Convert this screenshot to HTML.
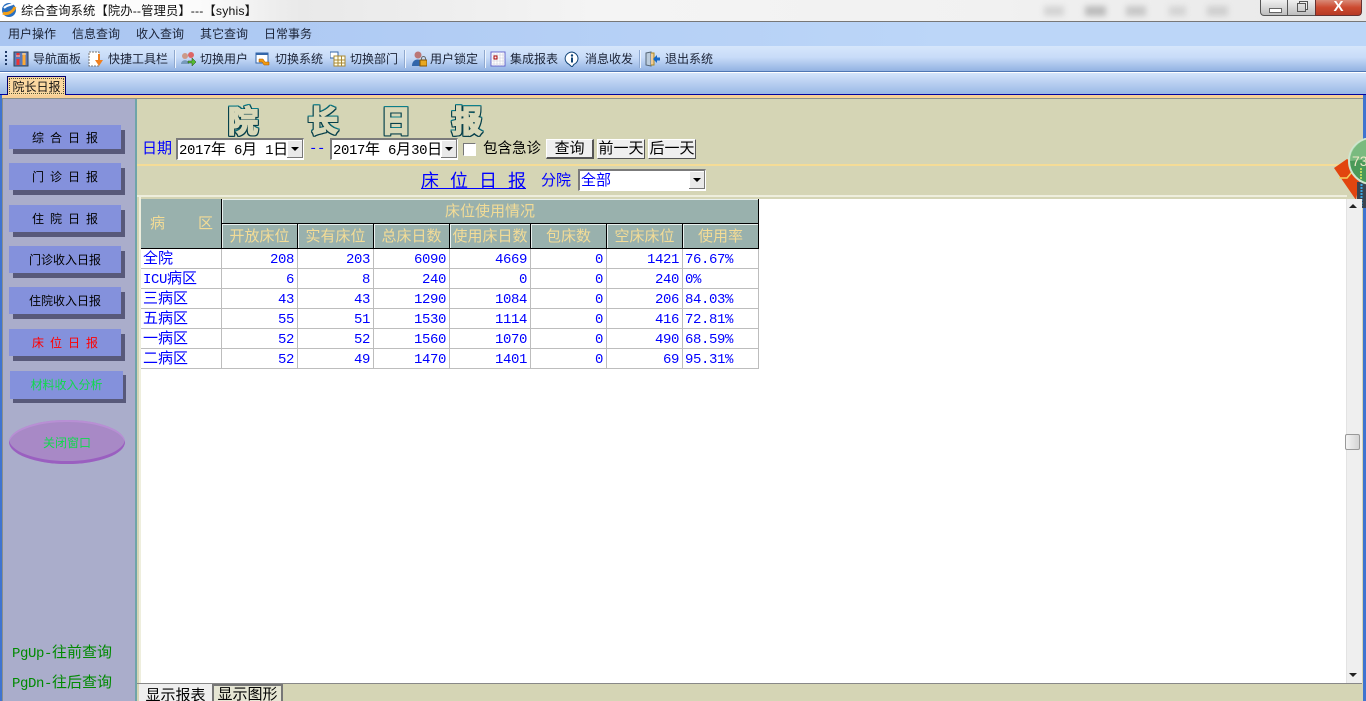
<!DOCTYPE html>
<html lang="zh"><head><meta charset="utf-8"><title>综合查询系统</title>
<style>
html,body{margin:0;padding:0;width:1366px;height:701px;overflow:hidden;background:#fff}
body{position:relative;font:13px "Liberation Sans","Noto Sans CJK SC",sans-serif;color:#000}
.a,.t,.b,.c,.i{position:absolute}
.m{font-family:"Liberation Mono",monospace;font-size:14px;letter-spacing:-.4px}
.t{white-space:pre;line-height:16px;font-size:12px;color:#1a2235}
.b{width:112px;height:27px;left:9px;background:#8491dc;text-align:center;line-height:29px;font-size:12px;box-shadow:4px 5px 0 #58597a;white-space:pre;word-spacing:2.7px}
.i{width:16px;height:16px;top:51px}
.sep{position:absolute;top:50px;width:1px;height:18px;background:#8fa9cf;box-shadow:1px 0 0 #eef4fd}
.c{height:20px;color:#00f;font:14px/22px "Liberation Mono",monospace;letter-spacing:-.4px;box-sizing:border-box;white-space:pre;background:#fff;border-right:1px solid #bdbdbd;border-bottom:1px solid #bdbdbd;padding:0 2px;overflow:hidden}
.n{font:15px/18px "Noto Sans CJK SC",sans-serif;letter-spacing:0}
.h{position:absolute;background:#99b1ad;color:#f3dc96;font-size:15px;text-align:center;box-sizing:border-box;border-right:1px solid #000;border-bottom:1px solid #000;box-shadow:inset 1px 1px 0 #e8f0ee;line-height:25px;white-space:pre}
.r{text-align:right;padding-right:3px}
.sel{position:absolute;height:22px;background:#fff;box-sizing:border-box;border-style:solid;border-width:2px 1px 1px 2px;border-color:#7b7b7b #fff #fff #7b7b7b;font:15px/18px "Noto Sans CJK SC",sans-serif;white-space:pre;padding-left:1px}
.arr{position:absolute;right:0;top:0;width:16px;height:18px;background:#e9e9e9;box-shadow:inset -1px -1px 0 #777,inset 1px 1px 0 #fff}
.arr:after{content:"";position:absolute;left:4px;top:7px;border:4px solid transparent;border-top:4px solid #000;border-bottom:0}
.btn{position:absolute;top:139px;height:20px;background:#efefef;box-sizing:border-box;border:1px solid;border-color:#fff #555 #555 #fff;text-align:center;font-size:15px;line-height:18px;color:#000;white-space:pre}
.big{position:absolute;top:97px;font:700 30px/44px "Noto Sans CJK SC",sans-serif;color:#d8d8b8;-webkit-text-stroke:1.8px #d8d8b8;paint-order:stroke fill;filter:drop-shadow(1px 0 0 #063f4a) drop-shadow(-1px 0 0 #06404a) drop-shadow(0 1px 0 #063f4a) drop-shadow(0 -1px 0 #0a7f8a)}
.blue{position:absolute;color:#00f;white-space:pre;font-size:15px;line-height:18px}
</style></head><body>

<!-- title bar -->
<div class="a" style="left:0;top:0;width:1366px;height:21px;background:linear-gradient(90deg,#fff 0,#fbfbfb 200px,#e9e9e9 300px,#f4f4f4 600px,#f1f1f1 1000px,#e8e8e8 1366px);border-bottom:1px solid #777"></div>
<svg class="a" style="left:1px;top:2px" width="16" height="16" viewBox="0 0 16 16"><circle cx="8" cy="8" r="7" fill="#2a6fc0"/><path d="M2 11C6 13 12 10 14 5" stroke="#f4a018" stroke-width="3" fill="none"/><path d="M3 6C6 3 10 3 12 2" stroke="#fff" stroke-width="2" fill="none"/></svg>
<div class="t" style="left:21px;top:3px;font-size:12.25px;letter-spacing:.16px;color:#111">综合查询系统【院办--管理员】---【syhis】</div>
<!-- blurred taskbar-like -->
<div class="a" style="left:1044px;top:6px;width:20px;height:10px;background:#d4d4d4;filter:blur(3px)"></div>
<div class="a" style="left:1085px;top:6px;width:21px;height:10px;background:#bcbcbc;filter:blur(3px)"></div>
<div class="a" style="left:1126px;top:6px;width:20px;height:10px;background:#c8c8c8;filter:blur(3px)"></div>
<div class="a" style="left:1169px;top:6px;width:17px;height:10px;background:#d4d4d4;filter:blur(3px)"></div>
<div class="a" style="left:1207px;top:6px;width:21px;height:10px;background:#cfcfcf;filter:blur(3px)"></div>
<!-- window controls -->
<div class="a" style="left:1260px;top:0;width:28px;height:16px;background:linear-gradient(#f0f0f0,#bdbdbd);border:1px solid #555;border-top:0;border-radius:0 0 0 4px;box-sizing:border-box"><div class="a" style="left:8px;top:8px;width:11px;height:3px;background:#fff;border:1px solid #666"></div></div>
<div class="a" style="left:1288px;top:0;width:27px;height:16px;background:linear-gradient(#f0f0f0,#bdbdbd);border-bottom:1px solid #555;box-sizing:border-box"><div class="a" style="left:9px;top:3px;width:7px;height:7px;border:1px solid #555;box-shadow:2px -2px 0 -1px #f0f0f0,2px -2px 0 0 #555"></div></div>
<div class="a" style="left:1315px;top:0;width:47px;height:16px;background:linear-gradient(#d98a78,#cc4a30 50%,#b73a26);border:1px solid #633;border-top:0;border-radius:0 0 4px 0;box-sizing:border-box;color:#fff;text-align:center;font:700 15px/14px 'Liberation Sans',sans-serif">X</div>

<!-- menu -->
<div class="a" style="left:0;top:22px;width:1366px;height:24px;background:linear-gradient(90deg,#a9c5f1,#bcd6f8 70%)"></div>
<div class="t" style="left:8px;top:26px">用户操作</div>
<div class="t" style="left:72px;top:26px">信息查询</div>
<div class="t" style="left:136px;top:26px">收入查询</div>
<div class="t" style="left:200px;top:26px">其它查询</div>
<div class="t" style="left:264px;top:26px">日常事务</div>

<!-- toolbar -->
<div class="a" style="left:0;top:46px;width:1366px;height:26px;background:linear-gradient(#d6e6fb,#c8dcf8 45%,#93b2e2);border-bottom:1px solid #4f76b3;box-sizing:border-box"></div>
<div class="a" style="left:5px;top:51px;width:2px;height:15px;background:repeating-linear-gradient(#1f3a66 0 2px,transparent 2px 4px)"></div>
<svg class="i" style="left:13px" viewBox="0 0 16 16"><rect x="1" y="1" width="14" height="14" fill="#5a78b8" stroke="#345"/><path d="M5 2v4M5 8v6" stroke="#e33" stroke-width="3"/><path d="M11 2v12" stroke="#fa3" stroke-width="3"/><path d="M3 5h4M9 3h4" stroke="#ddd"/></svg>
<svg class="i" style="left:88px" viewBox="0 0 16 16"><rect x="1" y="1" width="10" height="14" fill="#fff" stroke="#777" stroke-dasharray="2 1"/><path d="M10 3v6H7l4 6 4-6h-3V3z" fill="#f08020"/></svg>
<svg class="i" style="left:180px" viewBox="0 0 16 16"><circle cx="5" cy="5" r="3" fill="#c98"/><circle cx="11" cy="4" r="3" fill="#d66"/><path d="M1 13c0-5 8-5 8 0z" fill="#79b"/><path d="M8 10h4V7l4 4-4 4v-3H8z" fill="#5b3" stroke="#241" stroke-width=".5"/></svg>
<svg class="i" style="left:255px" viewBox="0 0 16 16"><rect x="1" y="2" width="12" height="10" fill="#fff" stroke="#36a"/><path d="M1 3h12" stroke="#36a" stroke-width="2"/><path d="M4 8h4l2 3h4v3h-5l-2-3H4z" fill="#f09a10" stroke="#a50" stroke-width=".5"/></svg>
<svg class="i" style="left:330px" viewBox="0 0 16 16"><rect x="0" y="1" width="8" height="6" fill="#fff" stroke="#36a"/><rect x="4" y="5" width="11" height="10" fill="#ffe" stroke="#a83"/><path d="M4 9h11M4 12h11M8 5v10M11.500 5v10" stroke="#a83"/></svg>
<svg class="i" style="left:411px" viewBox="0 0 16 16"><circle cx="7" cy="4" r="3.500" fill="#b77"/><path d="M1 15c0-8 9-8 10-3v3z" fill="#36a"/><rect x="9" y="9" width="7" height="6" fill="#e8a820" stroke="#850"/><path d="M10.500 9V7.500a2 2 0 014 0V9" stroke="#666" fill="none"/></svg>
<svg class="i" style="left:490px" viewBox="0 0 16 16"><rect x="1" y="1" width="14" height="14" fill="#fff" stroke="#66c"/><path d="M1 4h14M4 1v14M7 1v14M10 1v14M13 1v14M1 7h14M1 10h14M1 13h14" stroke="#ccd" stroke-width=".6"/><rect x="4" y="5" width="3" height="3" fill="none" stroke="#a00"/></svg>
<svg class="i" style="left:564px" viewBox="0 0 16 16"><path d="M8 1a7 6.500 0 00-3 12.300L8 16l2-2.700A7 6.500 0 008 1z" fill="#fff" stroke="#147"/><circle cx="8" cy="4.500" r="1.200" fill="#147"/><path d="M8 6.500v5" stroke="#147" stroke-width="2"/></svg>
<svg class="i" style="left:645px" viewBox="0 0 16 16"><path d="M1 2l5-1v14l-5-1z" fill="#bcd" stroke="#567"/><path d="M6 2h3v12H6" fill="#ec9" stroke="#a82"/><path d="M8 8l4-4v2.500h3v3h-3V12z" fill="#1668c8"/></svg>
<div class="t" style="left:33px;top:51px">导航面板</div>
<div class="t" style="left:108px;top:51px">快捷工具栏</div>
<div class="sep" style="left:174px"></div>
<div class="t" style="left:200px;top:51px">切换用户</div>
<div class="t" style="left:275px;top:51px">切换系统</div>
<div class="t" style="left:350px;top:51px">切换部门</div>
<div class="sep" style="left:404px"></div>
<div class="t" style="left:430px;top:51px">用户锁定</div>
<div class="sep" style="left:484px"></div>
<div class="t" style="left:510px;top:51px">集成报表</div>
<div class="t" style="left:585px;top:51px">消息收发</div>
<div class="sep" style="left:639px"></div>
<div class="t" style="left:665px;top:51px">退出系统</div>

<!-- tab strip -->
<div class="a" style="left:0;top:73px;width:1366px;height:21px;background:linear-gradient(#d4e4fb,#9ab8e6)"></div>
<div class="a" style="left:0;top:94px;width:1366px;height:1px;background:#0000a0"></div>
<div class="a" style="left:0;top:95px;width:1366px;height:3px;background:#f6cf96"></div>
<div class="a" style="left:7px;top:76px;width:59px;height:19px;background:#fbd8a0;border:1px solid #00006e;border-bottom:0;box-sizing:border-box"><div class="a" style="left:1px;top:1px;right:1px;bottom:1px;border:1px dotted #553;font-size:12px;line-height:17px;text-align:center;color:#111;box-sizing:border-box">院长日报</div></div>

<!-- frame sides -->
<div class="a" style="left:0;top:95px;width:2px;height:606px;background:#3f74d0"></div>
<div class="a" style="left:1363px;top:95px;width:3px;height:606px;background:#3f74d0"></div>
<div class="a" style="left:2px;top:98px;width:1361px;height:603px;background:#8a8f8c"></div>

<!-- left panel -->
<div class="a" style="left:3px;top:99px;width:132px;height:602px;background:#aaadcb"></div>
<div class="a" style="left:135px;top:99px;width:2px;height:602px;background:#6fa4a8"></div>
<div class="b" style="top:125px;height:24px;line-height:26px">综 合 日 报</div>
<div class="b" style="top:163px">门 诊 日 报</div>
<div class="b" style="top:205px">住 院 日 报</div>
<div class="b" style="top:246px">门诊收入日报</div>
<div class="b" style="top:287px">住院收入日报</div>
<div class="b" style="top:329px;color:#f00">床 位 日 报</div>
<div class="b" style="top:371px;left:10px;width:113px;height:28px;color:#12d84e;box-shadow:3px 4px 0 #58597a">材料收入分析</div>
<div class="a" style="left:9px;top:420px;width:116px;height:44px;border-radius:50%;background:#a889c6;box-shadow:inset 0 -3px 0 #9a5fc0,inset 0 2px 0 #b88fd4"></div>
<div class="a" style="left:9px;top:435px;width:116px;text-align:center;color:#12d84e;font-size:12px;line-height:16px">关闭窗口</div>
<div class="a" style="left:12px;top:643px;font:15px/18px 'Noto Sans CJK SC',sans-serif;color:#008a00;white-space:pre"><span class="m">PgUp-</span>往前查询</div>
<div class="a" style="left:12px;top:673px;font:15px/18px 'Noto Sans CJK SC',sans-serif;color:#008a00;white-space:pre"><span class="m">PgDn-</span>往后查询</div>

<!-- main panel -->
<div class="a" style="left:137px;top:99px;width:1226px;height:602px;background:#d5d5b5"></div>
<div class="big" style="left:228px">院</div>
<div class="big" style="left:308px">长</div>
<div class="big" style="left:381px">日</div>
<div class="big" style="left:452px">报</div>

<div class="blue" style="left:142px;top:140px">日期</div>
<div class="sel" style="left:176px;top:138px;width:128px"><span class="m">2017</span>年<span class="m"> 6</span>月<span class="m"> 1</span>日<div class="arr"></div></div>
<div class="blue" style="left:309px;top:140px;font-family:'Liberation Mono',monospace;font-size:14px;letter-spacing:-.4px">--</div>
<div class="sel" style="left:330px;top:138px;width:128px"><span class="m">2017</span>年<span class="m"> 6</span>月<span class="m">30</span>日<div class="arr"></div></div>
<div class="a" style="left:463px;top:143px;width:13px;height:13px;background:#fff;border:1px solid;border-color:#777 #fff #fff #777;box-sizing:border-box"></div>
<div class="a" style="left:483px;top:140px;font-size:14.5px;line-height:18px">包含急诊</div>
<div class="btn" style="left:546px;width:48px;border-width:1px 2px 2px 1px">查询</div>
<div class="btn" style="left:597px;width:48px">前一天</div>
<div class="btn" style="left:648px;width:48px">后一天</div>

<div class="a" style="left:137px;top:164px;width:1210px;height:2px;background:#f5dc96"></div>
<div class="blue" style="left:421px;top:170px;font-size:18px;line-height:22px;text-decoration:underline;word-spacing:6px">床 位 日 报</div>
<div class="blue" style="left:541px;top:172px">分院</div>
<div class="sel" style="left:578px;top:169px;width:128px;color:#00f">全部<div class="arr"></div></div>
<div class="a" style="left:137px;top:195px;width:1210px;height:2px;background:#eeeedd"></div>

<!-- orange & gauge -->
<svg class="a" style="left:1332px;top:138px" width="34" height="72" viewBox="0 0 34 72"><path d="M2 30L15 21 30 30 24 62z" fill="#e2450f"/><path d="M7 40h8l5-6" stroke="#f5d060" fill="none" stroke-width="1.500"/><rect x="25" y="44" width="9" height="26" fill="#3a4450"/><path d="M29.500 46v22" stroke="#3ba6e0" stroke-dasharray="2 1" stroke-width="2"/><circle cx="40" cy="23" r="23" fill="#4a9a58" stroke="#cfe6cf" stroke-width="2"/><path d="M18 23a22 20 0 0144-4" fill="#9ad09a" opacity=".6"/><path d="M29 30v12" stroke="#b8d860" stroke-width="2" stroke-dasharray="2 1"/><text x="20" y="28" font-family="Liberation Sans" font-size="14" fill="#f0e8c8">73</text></svg>

<!-- content -->
<div class="a" style="left:141px;top:199px;width:1205px;height:484px;background:#fff"></div>
<div class="a" style="left:139px;top:197px;width:2px;height:486px;background:#eeeedd"></div>

<!-- table -->
<div class="h" style="left:141px;top:199px;width:81px;height:50px;box-shadow:none"><span class="a" style="left:9px;top:12px">病</span><span class="a" style="left:57px;top:12px">区</span></div>
<div class="h" style="left:222px;top:199px;width:537px;height:25px">床位使用情况</div>
<div class="h" style="left:222px;top:224px;width:76px;height:25px">开放床位</div>
<div class="h" style="left:298px;top:224px;width:76px;height:25px">实有床位</div>
<div class="h" style="left:374px;top:224px;width:76px;height:25px">总床日数</div>
<div class="h" style="left:450px;top:224px;width:81px;height:25px">使用床日数</div>
<div class="h" style="left:531px;top:224px;width:76px;height:25px">包床数</div>
<div class="h" style="left:607px;top:224px;width:76px;height:25px">空床床位</div>
<div class="h" style="left:683px;top:224px;width:76px;height:25px">使用率</div>

<!-- rows -->
<div style="position:absolute;left:0;top:0">
<div class="c n" style="left:141px;top:249px;width:81px">全院</div><div class="c r" style="left:222px;top:249px;width:76px">208</div><div class="c r" style="left:298px;top:249px;width:76px">203</div><div class="c r" style="left:374px;top:249px;width:76px">6090</div><div class="c r" style="left:450px;top:249px;width:81px">4669</div><div class="c r" style="left:531px;top:249px;width:76px">0</div><div class="c r" style="left:607px;top:249px;width:76px">1421</div><div class="c" style="left:683px;top:249px;width:76px">76.67%</div>
<div class="c n" style="left:141px;top:269px;width:81px"><span class="m">ICU</span>病区</div><div class="c r" style="left:222px;top:269px;width:76px">6</div><div class="c r" style="left:298px;top:269px;width:76px">8</div><div class="c r" style="left:374px;top:269px;width:76px">240</div><div class="c r" style="left:450px;top:269px;width:81px">0</div><div class="c r" style="left:531px;top:269px;width:76px">0</div><div class="c r" style="left:607px;top:269px;width:76px">240</div><div class="c" style="left:683px;top:269px;width:76px">0%</div>
<div class="c n" style="left:141px;top:289px;width:81px">三病区</div><div class="c r" style="left:222px;top:289px;width:76px">43</div><div class="c r" style="left:298px;top:289px;width:76px">43</div><div class="c r" style="left:374px;top:289px;width:76px">1290</div><div class="c r" style="left:450px;top:289px;width:81px">1084</div><div class="c r" style="left:531px;top:289px;width:76px">0</div><div class="c r" style="left:607px;top:289px;width:76px">206</div><div class="c" style="left:683px;top:289px;width:76px">84.03%</div>
<div class="c n" style="left:141px;top:309px;width:81px">五病区</div><div class="c r" style="left:222px;top:309px;width:76px">55</div><div class="c r" style="left:298px;top:309px;width:76px">51</div><div class="c r" style="left:374px;top:309px;width:76px">1530</div><div class="c r" style="left:450px;top:309px;width:81px">1114</div><div class="c r" style="left:531px;top:309px;width:76px">0</div><div class="c r" style="left:607px;top:309px;width:76px">416</div><div class="c" style="left:683px;top:309px;width:76px">72.81%</div>
<div class="c n" style="left:141px;top:329px;width:81px">一病区</div><div class="c r" style="left:222px;top:329px;width:76px">52</div><div class="c r" style="left:298px;top:329px;width:76px">52</div><div class="c r" style="left:374px;top:329px;width:76px">1560</div><div class="c r" style="left:450px;top:329px;width:81px">1070</div><div class="c r" style="left:531px;top:329px;width:76px">0</div><div class="c r" style="left:607px;top:329px;width:76px">490</div><div class="c" style="left:683px;top:329px;width:76px">68.59%</div>
<div class="c n" style="left:141px;top:349px;width:81px">二病区</div><div class="c r" style="left:222px;top:349px;width:76px">52</div><div class="c r" style="left:298px;top:349px;width:76px">49</div><div class="c r" style="left:374px;top:349px;width:76px">1470</div><div class="c r" style="left:450px;top:349px;width:81px">1401</div><div class="c r" style="left:531px;top:349px;width:76px">0</div><div class="c r" style="left:607px;top:349px;width:76px">69</div><div class="c" style="left:683px;top:349px;width:76px">95.31%</div>
</div>

<!-- scrollbar -->
<div class="a" style="left:1346px;top:199px;width:16px;height:484px;background:#efefef;border-left:1px solid #e3e3e3;box-sizing:border-box"></div>
<div class="a" style="left:1349px;top:204px;border:4px solid transparent;border-bottom:4px solid #222;border-top:0"></div>
<div class="a" style="left:1349px;top:673px;border:4px solid transparent;border-top:4px solid #222;border-bottom:0"></div>
<div class="a" style="left:1345px;top:434px;width:15px;height:16px;background:linear-gradient(90deg,#f4f4f4,#d4d4d4);border:1px solid #999;border-radius:2px;box-sizing:border-box"></div>

<!-- bottom tabs -->
<div class="a" style="left:137px;top:683px;width:1226px;height:18px;background:#d5d5b5"></div>
<div class="a" style="left:137px;top:683px;width:1225px;height:1px;background:#888"></div>
<div class="a" style="left:139px;top:684px;width:73px;height:17px;background:#efefef;text-align:center;font-size:15px;line-height:23px;overflow:hidden">显示报表</div>
<div class="a" style="left:212px;top:684px;width:71px;height:17px;background:#e6e6d4;border:2px solid #777;border-bottom:0;box-sizing:border-box;text-align:center;font-size:15px;line-height:18px;overflow:hidden">显示图形</div>
</body></html>
